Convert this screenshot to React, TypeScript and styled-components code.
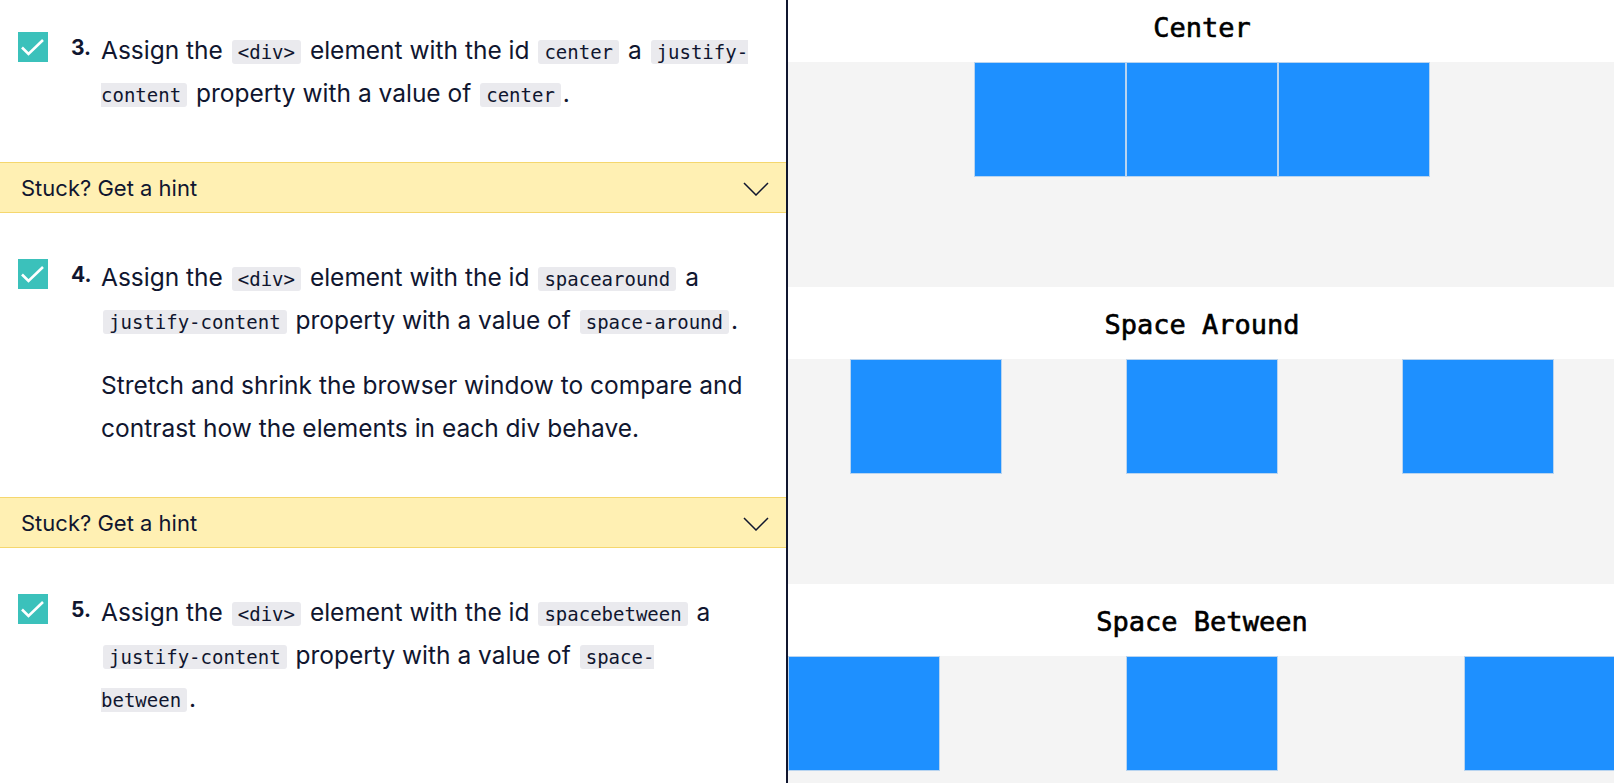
import React from 'react';
import styled, { createGlobalStyle } from 'styled-components';

const GlobalStyle = createGlobalStyle`
  * { box-sizing: border-box; }
  html, body {
    margin: 0;
    padding: 0;
    height: 100%;
    overflow: hidden;
    background: #ffffff;
  }
  #root { height: 100%; }
`;

const Page = styled.div`
  display: flex;
  height: 100vh;
  overflow: hidden;
`;

const Instructions = styled.div`
  width: 788px;
  flex-shrink: 0;
  overflow: hidden;
  border-right: 2px solid #10162f;
  font-family: Inter, "Noto Sans", sans-serif;
  color: #10162f;
`;

const Scrolled = styled.div<{ $offset: number }>`
  margin-top: ${p => -p.$offset}px;
`;

const Step = styled.div`
  display: flex;
  align-items: flex-start;
  padding: 43px 0 47px 18px;
`;

const Check = styled.span`
  display: flex;
  align-items: center;
  justify-content: center;
  flex-shrink: 0;
  width: 30px;
  height: 30px;
  margin: 3px 23px 0 0;
  background: #3bc1bb;
`;

const Num = styled.span`
  width: 30px;
  flex-shrink: 0;
  font-size: 21px;
  font-weight: 700;
  line-height: 38px;
`;

const Body = styled.div`
  font-size: 24.5px;
  line-height: 43px;
  white-space: nowrap;
`;

const Para = styled.p`
  margin: 0;
  & + & {
    margin-top: 22px;
  }
`;

const Code = styled.code`
  font-family: "DejaVu Sans Mono", monospace;
  font-size: 19px;
  line-height: 20px;
  background: #eaeaee;
  padding: 1px 6px;
  margin: 0 2px;
  border-radius: 3px;
`;

const Hint = styled.div`
  display: flex;
  align-items: center;
  justify-content: space-between;
  height: 51px;
  padding: 0 17px 0 21px;
  background: #fff0b3;
  border-top: 1px solid #f5d76e;
  border-bottom: 1px solid #f5d76e;
  font-size: 22px;
`;

const Chevron = styled.svg`
  width: 26px;
  height: 14px;
  margin-top: 3px;
`;

const Preview = styled.div`
  flex: 1;
  overflow: hidden;
  background: #ffffff;
`;

const Canvas = styled(Scrolled)`
  width: 828px;
`;

const Title = styled.h2`
  display: flex;
  align-items: center;
  justify-content: center;
  height: 72px;
  margin: 0;
  padding-top: 3px;
  font-family: "DejaVu Sans Mono", monospace;
  font-size: 27px;
  font-weight: 400;
  -webkit-text-stroke: 0.6px #000000;
  color: #000000;
`;

const Row = styled.div<{ $justify: string }>`
  display: flex;
  align-items: flex-start;
  justify-content: ${p => p.$justify};
  height: 225px;
  background: #f4f4f4;
`;

const Box = styled.div`
  flex-shrink: 0;
  width: 152px;
  height: 115px;
  background: #1e90ff;
  border: 1px solid #b8d4f0;
`;

const CheckMark = () => (
  <svg width="30" height="30" viewBox="0 0 30 30">
    <polyline points="4,15.5 10.5,22 25,8" fill="none" stroke="#fff" strokeWidth="2.6" />
  </svg>
);

const HintBar = () => (
  <Hint>
    <span>Stuck? Get a hint</span>
    <Chevron viewBox="0 0 26 14">
      <polyline points="1,1 13,13 25,1" fill="none" stroke="#10162f" strokeWidth="1.5" />
    </Chevron>
  </Hint>
);

const sections = [
  { title: 'Center', justify: 'center' },
  { title: 'Space Around', justify: 'space-around' },
  { title: 'Space Between', justify: 'space-between' },
];

export default function App() {
  return (
    <>
      <GlobalStyle />
      <Page>
        <Instructions>
          <Scrolled $offset={14}>
            <Step>
              <Check><CheckMark /></Check>
              <Num>3.</Num>
              <Body>
                <Para>
                  Assign the <Code>&lt;div&gt;</Code> element with the id <Code>center</Code> a <Code>justify-<br />content</Code> property with a value of <Code>center</Code>.
                </Para>
              </Body>
            </Step>
            <HintBar />
            <Step>
              <Check><CheckMark /></Check>
              <Num>4.</Num>
              <Body>
                <Para>
                  Assign the <Code>&lt;div&gt;</Code> element with the id <Code>spacearound</Code> a<br />
                  <Code>justify-content</Code> property with a value of <Code>space-around</Code>.
                </Para>
                <Para>
                  Stretch and shrink the browser window to compare and<br />
                  contrast how the elements in each div behave.
                </Para>
              </Body>
            </Step>
            <HintBar />
            <Step>
              <Check><CheckMark /></Check>
              <Num>5.</Num>
              <Body>
                <Para>
                  Assign the <Code>&lt;div&gt;</Code> element with the id <Code>spacebetween</Code> a<br />
                  <Code>justify-content</Code> property with a value of <Code>space-<br />between</Code>.
                </Para>
              </Body>
            </Step>
          </Scrolled>
        </Instructions>
        <Preview>
          <Canvas $offset={10}>
            {sections.map(s => (
              <section key={s.title}>
                <Title>{s.title}</Title>
                <Row $justify={s.justify}>
                  <Box />
                  <Box />
                  <Box />
                </Row>
              </section>
            ))}
          </Canvas>
        </Preview>
      </Page>
    </>
  );
}
